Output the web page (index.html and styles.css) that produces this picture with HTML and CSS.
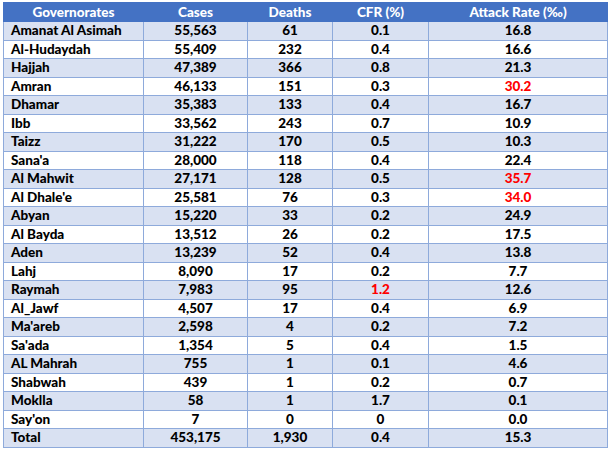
FILE: index.html
```html
<!DOCTYPE html>
<html>
<head>
<meta charset="utf-8">
<link rel="stylesheet" href="styles.css">
</head>
<body>
<table class="data">
<colgroup>
<col class="c-gov"><col class="c-cases"><col class="c-deaths"><col class="c-cfr"><col class="c-ar">
</colgroup>
<thead>
<tr><th>Governorates</th><th>Cases</th><th>Deaths</th><th>CFR (%)</th><th>Attack Rate (‰)</th></tr>
</thead>
<tbody>
<tr><td>Amanat Al Asimah</td><td>55,563</td><td>61</td><td>0.1</td><td>16.8</td></tr>
<tr><td>Al-Hudaydah</td><td>55,409</td><td>232</td><td>0.4</td><td>16.6</td></tr>
<tr><td>Hajjah</td><td>47,389</td><td>366</td><td>0.8</td><td>21.3</td></tr>
<tr><td>Amran</td><td>46,133</td><td>151</td><td>0.3</td><td class="red">30.2</td></tr>
<tr><td>Dhamar</td><td>35,383</td><td>133</td><td>0.4</td><td>16.7</td></tr>
<tr><td>Ibb</td><td>33,562</td><td>243</td><td>0.7</td><td>10.9</td></tr>
<tr><td>Taizz</td><td>31,222</td><td>170</td><td>0.5</td><td>10.3</td></tr>
<tr><td>Sana'a</td><td>28,000</td><td>118</td><td>0.4</td><td>22.4</td></tr>
<tr><td>Al Mahwit</td><td>27,171</td><td>128</td><td>0.5</td><td class="red">35.7</td></tr>
<tr><td>Al Dhale'e</td><td>25,581</td><td>76</td><td>0.3</td><td class="red">34.0</td></tr>
<tr><td>Abyan</td><td>15,220</td><td>33</td><td>0.2</td><td>24.9</td></tr>
<tr><td>Al Bayda</td><td>13,512</td><td>26</td><td>0.2</td><td>17.5</td></tr>
<tr><td>Aden</td><td>13,239</td><td>52</td><td>0.4</td><td>13.8</td></tr>
<tr><td>Lahj</td><td>8,090</td><td>17</td><td>0.2</td><td>7.7</td></tr>
<tr><td>Raymah</td><td>7,983</td><td>95</td><td class="red">1.2</td><td>12.6</td></tr>
<tr><td>Al_Jawf</td><td>4,507</td><td>17</td><td>0.4</td><td>6.9</td></tr>
<tr><td>Ma'areb</td><td>2,598</td><td>4</td><td>0.2</td><td>7.2</td></tr>
<tr><td>Sa'ada</td><td>1,354</td><td>5</td><td>0.4</td><td>1.5</td></tr>
<tr><td>AL Mahrah</td><td>755</td><td>1</td><td>0.1</td><td>4.6</td></tr>
<tr><td>Shabwah</td><td>439</td><td>1</td><td>0.2</td><td>0.7</td></tr>
<tr><td>Moklla</td><td>58</td><td>1</td><td>1.7</td><td>0.1</td></tr>
<tr><td>Say'on</td><td>7</td><td>0</td><td>0</td><td>0.0</td></tr>
<tr><td>Total</td><td>453,175</td><td>1,930</td><td>0.4</td><td>15.3</td></tr>
</tbody>
</table>
</body>
</html>
```
FILE: styles.css
```css
html, body {
  margin: 0;
  padding: 0;
  background: #ffffff;
}
body {
  padding: 2px 0 0 3px;
  font-family: Lato, "Liberation Sans", sans-serif;
  font-weight: 900;
  font-size: 13.5px;
  color: #000000;
}
.data {
  border-collapse: collapse;
  table-layout: fixed;
  width: 604px;
}
.c-gov { width: 140px; }
.c-cases { width: 104px; }
.c-deaths { width: 85px; }
.c-cfr { width: 96px; }
.c-ar { width: 179px; }
.data th {
  background: #4472c4;
  color: #ffffff;
  height: 18px;
  padding: 0;
  font-weight: 900;
  line-height: 16px;
  text-align: center;
  border: 1px solid #4472c4;
}
.data td {
  height: 17.5px;
  padding: 0;
  text-align: center;
  border: 1px solid #8eaadb;
  line-height: 15px;
}
.data td:first-child {
  text-align: left;
  padding-left: 7px;
}
.data tbody tr:nth-child(odd) td {
  background: #d9e1f2;
}
.data td.red {
  color: #ff0000;
}
```
